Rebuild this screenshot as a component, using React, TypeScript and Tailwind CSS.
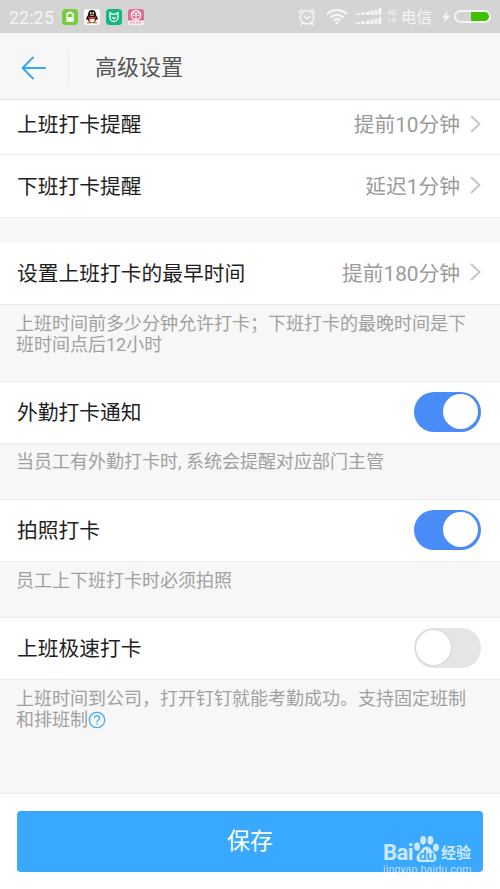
import type { ReactNode } from "react";
import clsx from "clsx";

function StatusBar() {
  return (
    <header className="flex h-[33px] shrink-0 items-center bg-[#d4d4d4] pl-[9px] pr-[9px] text-[#f5f5f5]">
      <span className="w-[53px] whitespace-nowrap pt-[2px] text-[18px] leading-[32px]">22:25</span>

      <div className="flex items-center gap-[6px]">
        <svg width="16" height="16" viewBox="0 0 16 16">
          <rect width="16" height="16" rx="3.5" fill="#77cc42" />
          <path d="M6.5 3.5h3v1.200h1.500v7.300H5V4.700h1.500z" fill="none" stroke="#fff" strokeWidth="1.300" />
          <rect x="5.5" y="8" width="5" height="4" fill="#fff" />
        </svg>
        <svg width="16" height="16" viewBox="0 0 16 16">
          <rect width="16" height="16" rx="2.5" fill="#fbfbfb" />
          <ellipse cx="5" cy="13.6" rx="2.5" ry="1.2" fill="#eba13b" />
          <ellipse cx="11" cy="13.6" rx="2.5" ry="1.2" fill="#eba13b" />
          <path d="M4 6C4 2.5 5.5 1 8 1s4 1.5 4 5c1.500 2 2.200 4.500 1.500 5-.5.2-1-.6-1.500-1 0 2.500-1.800 4-4 4s-4-1.500-4-4c-.5.4-1 1.200-1.500 1-.7-.5 0-3 1.500-5z" fill="#111" />
          <ellipse cx="8" cy="10.8" rx="2.8" ry="2.600" fill="#fff" />
          <path d="M3.800 7.200c2.500 1.500 6 1.500 8.400 0v1.700c-2 1.100-4.200 1.200-6 .8v2.100H4.700V9z" fill="#dd2a2a" />
          <ellipse cx="6.700" cy="4" rx=".8" ry="1.100" fill="#fff" />
          <ellipse cx="9.300" cy="4" rx=".8" ry="1.100" fill="#fff" />
          <ellipse cx="8" cy="6.300" rx="2.300" ry=".8" fill="#eba13b" />
        </svg>
        <svg width="16" height="16" viewBox="0 0 16 16">
          <rect width="16" height="16" rx="3.5" fill="#12b782" />
          <path d="M4 3.500v5a4 4 0 0 0 8 0v-5L9.800 5.200H6.200zM6.200 8.300 8 9.800l1.800-1.500" fill="none" stroke="#fff" strokeWidth="1.300" strokeLinejoin="round" />
        </svg>
        <svg width="16" height="16" viewBox="0 0 16 16">
          <rect width="16" height="16" rx="2.500" fill="#fbeff2" />
          <path d="M0 11.500V2.500A2.500 2.500 0 0 1 2.500 0h11A2.500 2.500 0 0 1 16 2.500v9z" fill="#de6e8e" />
          <circle cx="8" cy="6" r="4.700" fill="none" stroke="#fff" strokeWidth="1.200" />
          <circle cx="6.300" cy="5" r="1.600" fill="none" stroke="#fff" />
          <circle cx="9.700" cy="5" r="1.600" fill="none" stroke="#fff" />
          <path d="M8 7v3" stroke="#fff" />
          <path d="M2 13.800h12" stroke="#de6e8e" strokeDasharray="2 1" />
        </svg>
      </div>

      <div className="ml-auto flex items-center">
        <svg width="18" height="18" viewBox="0 0 18 18" fill="none" stroke="currentColor" strokeWidth="1.500" strokeLinecap="round">
          <circle cx="9" cy="9.200" r="6.800" />
          <path d="M6.200 8.200 9 10.800l3-2.600M1 4.200 3.800 1.500M17 4.200l-2.800-2.700M4.500 15 3 16.800M13.500 15l1.500 1.800" />
        </svg>
        <svg className="ml-[10px]" width="22" height="17" viewBox="0 0 22 17" fill="none" stroke="currentColor" strokeWidth="2.300">
          <path d="M1 6.200a14.200 14.200 0 0 1 20 0M4.400 9.600a9.400 9.400 0 0 1 13.200 0M7.600 12.600a4.900 4.900 0 0 1 6.800 0" />
          <circle cx="11" cy="15" r="1.300" fill="currentColor" stroke="none" />
        </svg>
        <svg className="ml-[8px]" width="27" height="17" viewBox="0 0 27 17" fill="currentColor">
          <path d="M0 5.500h4V7H0zM5 4.500h4V7H5zM10 3.500h3.500V7H10zM14.500 2.500h3V7h-3zM18.500 1.500h3V7h-3zM22.500 0h3v7h-3z" />
          <path d="M0 14.500h4V16H0zM5 13.500h4V16H5zM10 12.500h3.500V16H10zM14.500 11.500h3V16h-3zM18.500 10.500h3V16h-3zM22.500 9h3v7h-3z" />
        </svg>
        <span className="ml-[4px] w-[10px] text-[8px] leading-[8px]">
          4G
          <br />
          1X
        </span>
        <span className="ml-[4px] pt-[3px] text-[15.500px] leading-[30px]">电信</span>
        <svg className="ml-[10px]" width="8" height="12" viewBox="0 0 8 12" fill="currentColor">
          <path d="M5.500 0 0 7h3.200L2 12l6-7.200H4.600z" />
        </svg>
        <div className="ml-[4px] h-[13px] w-[37px] rounded-full border-2 border-[#f5f5f5]">
          <div className="ml-auto h-full w-[18px] rounded-r-full bg-[#3fc000]" />
        </div>
      </div>
    </header>
  );
}

function Row({ label, className = "h-[62px]", children }: { label: string; className?: string; children: ReactNode }) {
  return (
    <div
      className={clsx(
        "flex shrink-0 items-center justify-between border-b border-[#ececec] bg-white pl-[17px] pr-[19px]",
        className,
      )}
    >
      <span className="text-[20.750px] leading-[30px] text-[#1f1f1f]">{label}</span>
      {children}
    </div>
  );
}

function Value({ children }: { children: ReactNode }) {
  return (
    <span className="flex items-center text-[20.750px] leading-[30px] text-[#9b9b9b]">
      {children}
      <svg className="mb-[3px] ml-[10px]" width="11" height="18" viewBox="0 0 11 18" fill="none" stroke="#c4c4c4" strokeWidth="1.800">
        <path d="m1 1 8.500 8L1 17" />
      </svg>
    </span>
  );
}

function Toggle({ on }: { on?: boolean }) {
  return (
    <button
      className={clsx(
        "mb-[2px] flex h-[40px] w-[67px] items-center rounded-full",
        on ? "justify-end bg-[#4a8cf7] pr-[3px]" : "justify-start bg-[#e5e5e5] pl-[2px]",
      )}
    >
      <span className={clsx("size-[35px] rounded-full bg-white", !on && "shadow-[0_0_2px_rgba(0,0,0,0.2)]")} />
    </button>
  );
}

function Hint({ className, children }: { className: string; children: ReactNode }) {
  return (
    <p className={clsx("shrink-0 whitespace-nowrap border-b border-[#ececec] pl-[16px] text-[18px] leading-[20.500px] text-[#a0a0a0]", className)}>
      {children}
    </p>
  );
}

function Watermark() {
  return (
    <div className="absolute left-[383px] top-[41px] h-[50px] w-[92px] text-white/75">
      <div className="flex h-[30px] items-end font-bold">
        <span className="w-[30px] text-[22px] leading-[24px] tracking-[-0.500px]">Bai</span>
        <svg className="mb-[2px]" width="27" height="28" viewBox="0 0 27 29" fill="currentColor">
          <ellipse cx="3.800" cy="12" rx="3" ry="4.300" />
          <ellipse cx="10" cy="5.500" rx="3" ry="4.500" />
          <ellipse cx="17.500" cy="5.500" rx="3" ry="4.500" />
          <ellipse cx="23.300" cy="13" rx="3" ry="4.200" />
          <path d="M13.500 12c4 0 5 4 8 6.500 3.500 3 3.500 9.500-2 9.500h-12c-5.500 0-5.500-6-2-9 3-2.500 4-7 8-7z" />
          <text x="13.500" y="25.500" textAnchor="middle" fontSize="14" fill="#3faafb">
            du
          </text>
        </svg>
        <span className="ml-[1px] text-[15px] leading-[23px]">经验</span>
      </div>
      <div className="-mt-[2px] whitespace-nowrap text-[10.600px] leading-[14px] tracking-[0.150px] [text-shadow:0_0_1px_rgba(0,0,0,0.12)]">
        jingyan.baidu.com
      </div>
    </div>
  );
}

export default function App() {
  return (
    <div className="flex h-[889px] w-[500px] flex-col overflow-hidden bg-[#f7f7f7] font-[Roboto,'Noto_Sans_CJK_SC',sans-serif]">
      <StatusBar />

      <nav className="flex h-[67px] shrink-0 items-center border-b border-[#e4e4e4] pl-[21px] pt-[3px]">
        <svg width="26" height="24" viewBox="0 0 26 24" fill="none" stroke="#38a4f5" strokeWidth="1.900" strokeLinecap="round" strokeLinejoin="round">
          <path d="M24 12H2M12 1.500 1.500 12 12 22.500" />
        </svg>
        <div className="ml-[21px] h-[38px] w-px bg-[#e8e8e8]" />
        <h1 className="ml-[26px] text-[22px] leading-[32px] text-[#555]">高级设置</h1>
      </nav>

      <main className="flex min-h-0 flex-1 flex-col">
        <Row label="上班打卡提醒" className="h-[55px] pb-[4px]">
          <Value>提前10分钟</Value>
        </Row>
        <Row label="下班打卡提醒" className="h-[63px] pt-px">
          <Value>延迟1分钟</Value>
        </Row>

        <div className="h-[25px] shrink-0" />

        <Row label="设置上班打卡的最早时间">
          <Value>提前180分钟</Value>
        </Row>
        <Hint className="h-[77px] pt-[9px]">
          上班时间前多少分钟允许打卡；下班打卡的最晚时间是下
          <br />
          班时间点后12小时
        </Hint>

        <Row label="外勤打卡通知">
          <Toggle on />
        </Row>
        <Hint className="h-[56px] pt-[8px]">当员工有外勤打卡时, 系统会提醒对应部门主管</Hint>

        <Row label="拍照打卡">
          <Toggle on />
        </Row>
        <Hint className="h-[56px] pt-[9px]">员工上下班打卡时必须拍照</Hint>

        <Row label="上班极速打卡">
          <Toggle />
        </Row>
        <Hint className="flex-1 pt-[9px]">
          上班时间到公司，打开钉钉就能考勤成功。支持固定班制
          <br />
          和排班制
          <svg className="inline-block align-[-3px]" width="18" height="18" viewBox="0 0 18 18" fill="none" stroke="#4aabf5" strokeWidth="1.300">
            <circle cx="9" cy="9" r="7.700" />
            <path d="M6.500 7.200c0-3.400 5-3.400 5 0 0 1.800-2.500 1.900-2.500 4M9 12.300v1.500" />
          </svg>
        </Hint>
      </main>

      <footer className="relative h-[95px] shrink-0 bg-white px-[17px] pt-[17px]">
        <button className="block h-[61px] w-full rounded-[4px] bg-[#38a9ff] text-[23px] leading-[60px] text-white">保存</button>
        <Watermark />
      </footer>
    </div>
  );
}
